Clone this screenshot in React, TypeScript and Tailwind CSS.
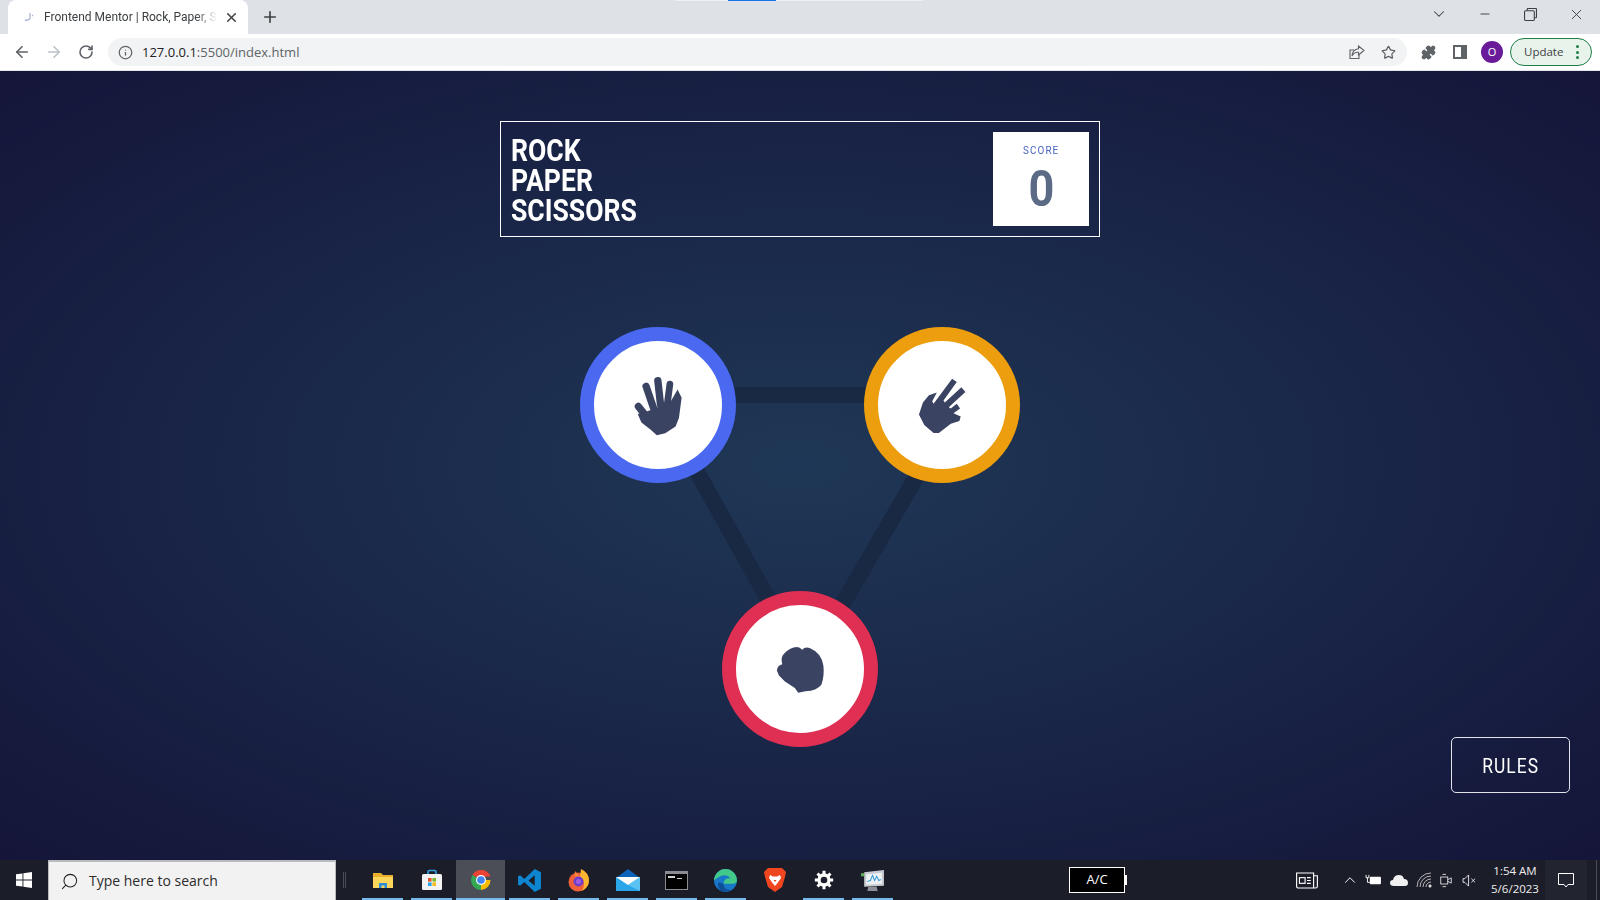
import { ArrowLeft, ArrowRight, RotateCw, Info, Star, Puzzle, X, Plus, ChevronDown, Minus, Search, ChevronUp } from 'lucide-react';

// hand drawings, coordinates taken from a 170x170 crop at 3x
const PaperIcon = () => (
  <svg viewBox="180 155 170 200" className="w-[57px] h-[67px]" fill="#3b4363">
    <g stroke="#3b4363" strokeLinecap="round" fill="none">
      <path d="M205 258 L232 292" strokeWidth="22" />
      <path d="M228 198 L250 262" strokeWidth="22" />
      <path d="M263 181 L271 252" strokeWidth="22" />
      <path d="M299 191 L291 252" strokeWidth="20" />
    </g>
    <path d="M322 207 L334 232 L326 292 L316 318 L285 338 L260 344 L240 326 L214 306 L203 280 L232 272 L300 245 Z" />
  </svg>
);

const ScissorsIcon = () => (
  <svg viewBox="160 160 170 190" className="w-[57px] h-[63px]" fill="#3b4363">
    <path d="M174 282 L186 246 L204 224 L228 216 L214 242 L218 250 L274 174 L288 184 L248 240 L252 246 L302 200 L314 214 L264 260 L270 264 L288 250 L298 264 L278 278 L300 288 L296 302 L270 310 L234 338 L218 338 L190 314 Z" />
  </svg>
);

const RockIcon = () => (
  <svg viewBox="170 170 170 160" className="w-[57px] h-[53px]" fill="#3b4363">
    <path d="M184 254 Q184 238 200 234 Q194 212 206 202 Q224 182 244 182 Q254 182 260 190 Q270 180 284 186 Q318 200 324 238 Q328 268 318 296 Q304 314 270 316 L248 320 L238 306 L208 286 L190 268 Z" />
  </svg>
);

const Token = ({ ring, children }: { ring: string; children: React.ReactNode }) => (
  <div className={`relative w-[156px] h-[156px] rounded-full border-[14px] bg-white flex items-center justify-center ${ring}`}>
    {children}
  </div>
);

const TaskSlot = ({ active, line = true, children }: { active?: boolean; line?: boolean; children: React.ReactNode }) => (
  <div className={`relative w-[49px] h-10 flex items-center justify-center ${active ? 'bg-[#4b4d57]' : ''}`}>
    {children}
    {line && <div className={`absolute bottom-0 h-[2px] bg-[#76b9ed] ${active ? 'inset-x-0' : 'inset-x-[4px]'}`} />}
  </div>
);

const App = () => {
  return (
    <div className="w-[1600px] h-[900px] overflow-hidden flex flex-col relative" style={{ fontFamily: '"Open Sans", sans-serif' }}>
      {/* Tab strip */}
      <div className="h-[34px] bg-[#dee1e6] flex items-end shrink-0 relative">
        <div className="absolute top-0 left-[675px] w-[248px] h-px bg-[#eef0f3]" />
        <div className="absolute top-0 left-[728px] w-[48px] h-px bg-[#1a73e8]" />
        <div className="ml-[8px] w-[240px] h-[34px] bg-white rounded-t-[8px] flex items-center pl-[12px] pr-[9px]">
          <svg viewBox="0 0 16 16" className="w-4 h-4 shrink-0 mr-[8px]" fill="none" stroke="#a9b4d8" strokeWidth="1.3">
            <path d="M10 4 V9 Q9 12 5 11" />
            <path d="M13 6 L12 7" />
          </svg>
          <span className="text-[12px] text-[#3c4043] whitespace-nowrap overflow-hidden flex-1 [mask-image:linear-gradient(to_right,black_88%,transparent)]" style={{ fontFamily: 'Roboto, sans-serif' }}>
            Frontend Mentor | Rock, Paper, Scissors
          </span>
          <X className="w-[15px] h-[15px] ml-[7px] text-[#3c4043] shrink-0" strokeWidth={2.4} />
        </div>
        <div className="ml-[13px] h-[34px] flex items-center">
          <Plus className="w-[18px] h-[18px] text-[#3c4043]" strokeWidth={2.2} />
        </div>
        <div className="ml-auto h-[28px] mb-[6px] flex items-center text-[#3c4043]">
          <ChevronDown className="w-[18px] h-[18px] mr-[30px]" strokeWidth={1.4} />
          <Minus className="w-[14px] h-[14px] mr-[32px]" strokeWidth={1.6} />
          <svg viewBox="0 0 12 12" className="w-[13px] h-[13px] mr-[31px]" fill="none" stroke="#3c4043" strokeWidth="1">
            <rect x="0.5" y="2.5" width="9" height="9" rx="1" />
            <path d="M3 2.5 V1 Q3 .5 3.5 .5 H11 Q11.5 .5 11.5 1 V8.5 Q11.5 9 11 9 H9.5" />
          </svg>
          <X className="w-[17px] h-[17px] mr-[15px]" strokeWidth={1.3} />
        </div>
      </div>

      {/* Toolbar */}
      <div className="h-[37px] bg-white flex items-center shrink-0 border-b border-[#e4e6e9]">
        <ArrowLeft className="w-[18px] h-[18px] ml-[13px] text-[#5f6368]" strokeWidth={2.2} />
        <ArrowRight className="w-[18px] h-[18px] ml-[14px] text-[#bdc1c6]" strokeWidth={2.2} />
        <RotateCw className="w-[16px] h-[16px] ml-[15px] text-[#5f6368]" strokeWidth={2.4} />
        <div className="ml-[14px] w-[1299px] h-[28px] bg-[#f1f3f4] rounded-full flex items-center pl-[10px] pr-[11px]">
          <Info className="w-[15px] h-[15px] text-[#5f6368]" strokeWidth={2} />
          <span className="ml-[9px] pt-px text-[13px] text-[#5f6368]">
            <span className="text-[#202124]">127.0.0.1</span>:5500/index.html
          </span>
          <div className="ml-auto flex items-center gap-[16px]">
            <svg viewBox="0 0 16 16" className="w-[16px] h-[16px]" fill="none" stroke="#5f6368" strokeWidth="1.1">
              <path d="M10 9.5 V14.5 H1 V6 H5" />
              <path d="M9.5 2 L15 6.5 L9.5 11 V8.3 Q5 8 3 12 Q3.5 5.5 9.5 4.8 Z" />
            </svg>
            <Star className="w-[15px] h-[15px] text-[#5f6368]" strokeWidth={2} />
          </div>
        </div>
        <Puzzle className="w-[15px] h-[15px] ml-[14px] text-[#5f6368] fill-[#5f6368]" />
        <svg viewBox="0 0 14 14" className="w-[14px] h-[14px] ml-[17px]">
          <path d="M0 0 H14 V14 H0 Z M2 2 V12 H8 V2 Z" fill="#5f6368" fillRule="evenodd" />
        </svg>
        <div className="ml-[14px] w-[22px] h-[22px] rounded-full bg-[#6a1b9a] text-white text-[11px] flex items-center justify-center">O</div>
        <div className="ml-[7px] w-[82px] h-[28px] rounded-full border border-[#1e7e45] bg-[#e8f3ec] flex items-center pl-[13px]">
          <span className="text-[11.5px] text-[#3c4043]">Update</span>
          <div className="ml-[13px] flex flex-col gap-[2.5px]">
            <span className="w-[3px] h-[3px] rounded-full bg-[#1e7e45]" />
            <span className="w-[3px] h-[3px] rounded-full bg-[#1e7e45]" />
            <span className="w-[3px] h-[3px] rounded-full bg-[#1e7e45]" />
          </div>
        </div>
      </div>

      {/* Page */}
      <div className="flex-1 flex flex-col items-center bg-[radial-gradient(#1f3756,#141539)] min-h-0" style={{ fontFamily: 'Roboto, sans-serif' }}>
        <div className="mt-[50px] w-[600px] h-[116px] border border-white flex items-center justify-between pl-[10px] pr-[10px]">
          <h1 className="text-white text-[32px] leading-[30px] font-bold scale-x-[.83] origin-left pt-[2px]">
            ROCK
            <br />
            PAPER
            <br />
            SCISSORS
          </h1>
          <div className="w-[96px] h-[94px] bg-white flex flex-col items-center pt-[12px]">
            <span className="text-[#4865c4] text-[11px] leading-[14px] tracking-[1.2px] scale-x-[.9]">SCORE</span>
            <span className="text-[#5c6b85] text-[50px] leading-[52px] font-bold mt-[5px] scale-x-[.9]">0</span>
          </div>
        </div>

        {/* Board */}
        <div className="relative mt-[90px] w-[440px]">
          <svg viewBox="0 0 440 420" className="absolute inset-0 w-[440px] h-[420px]" fill="none" stroke="#192843" strokeWidth="16">
            <path d="M74 68 H384 L226 340 Z" />
          </svg>
          <div className="relative flex justify-between">
            <Token ring="border-[#4a69f0]"><PaperIcon /></Token>
            <Token ring="border-[#ec9e0e]"><ScissorsIcon /></Token>
          </div>
          <div className="relative flex justify-center mt-[108px]">
            <Token ring="border-[#df2f53]"><RockIcon /></Token>
          </div>
        </div>

        <button className="-mt-[10px] self-end mr-[30px] w-[119px] h-[56px] rounded-[5px] border border-[#e2e4ea] text-white text-[20px] tracking-[1.2px] pt-px">
          <span className="inline-block scale-x-[.87]">RULES</span>
        </button>
      </div>

      {/* Taskbar */}
      <div className="h-10 bg-[#1b1d29] flex items-center shrink-0 text-white">
        <div className="w-[48px] flex justify-center">
          <svg viewBox="0 0 16 16" className="w-4 h-4" fill="#fff">
            <path d="M0 2.3 L6.5 1.4 V7.6 H0 Z M7.4 1.3 L16 0 V7.6 H7.4 Z M0 8.4 H6.5 V14.6 L0 13.7 Z M7.4 8.4 H16 V16 L7.4 14.7 Z" />
          </svg>
        </div>
        <div className="w-[288px] h-10 bg-[#f2f2f2] border-t-2 border-x border-[#b9bbbf] flex items-center pl-[11px]">
          <Search className="w-[19px] h-[19px] text-[#222] -scale-x-100" strokeWidth={1.3} />
          <span className="ml-[10px] -mt-[2px] text-[14px] text-[#2c2c2c]">Type here to search</span>
        </div>
        <div className="ml-[7px] w-[3px] h-[16px] border-x border-[#4a4c56] mr-[12px]" />

        <TaskSlot>
          <svg viewBox="0 0 24 24" className="w-[24px] h-[24px]">
            <path d="M2 5 H10 L12 7 H22 V20 H2 Z" fill="#e8b02c" />
            <path d="M2 9 H22 V20 H2 Z" fill="#fbd65a" />
            <path d="M8 20 V15 H16 V20 H13.5 V17.5 H10.5 V20 Z" fill="#2a8fd8" />
          </svg>
        </TaskSlot>
        <TaskSlot>
          <svg viewBox="0 0 24 24" className="w-[24px] h-[24px]">
            <path d="M8 7 V4 Q8 2.5 9.5 2.5 H14.5 Q16 2.5 16 4 V7" fill="none" stroke="#35a6e8" strokeWidth="1.6" />
            <rect x="2" y="6" width="20" height="16" rx="1.5" fill="#f4f4f4" />
            <rect x="8" y="10" width="3.6" height="3.6" fill="#e8532a" />
            <rect x="12.4" y="10" width="3.6" height="3.6" fill="#7dba2f" />
            <rect x="8" y="14.4" width="3.6" height="3.6" fill="#2aa3e8" />
            <rect x="12.4" y="14.4" width="3.6" height="3.6" fill="#f6b91d" />
          </svg>
        </TaskSlot>
        <TaskSlot active>
          <svg viewBox="0 0 24 24" className="w-[24px] h-[24px]">
            <path d="M12 12 L3.4 7 A10 10 0 0 1 21.5 8.5 H12 Z" fill="#ea4335" />
            <path d="M12 12 L12 22 A10 10 0 0 1 3.4 7 Z" fill="#34a853" />
            <path d="M12 12 H21.5 A10 10 0 0 1 12 22 Z" fill="#fbbc04" />
            <circle cx="12" cy="12" r="5" fill="#fff" />
            <circle cx="12" cy="12" r="3.8" fill="#4285f4" />
          </svg>
        </TaskSlot>
        <TaskSlot>
          <svg viewBox="0 0 24 24" className="w-[25px] h-[25px]">
            <path d="M17 1 L23 4 V20 L17 23 L7 13.5 L3 17 L1 16 V8 L3 7 L7 10.5 Z M17 7 L11 12 L17 17 Z" fill="#0e85d0" fillRule="evenodd" />
          </svg>
        </TaskSlot>
        <TaskSlot>
          <svg viewBox="0 0 24 24" className="w-[24px] h-[24px]">
            <circle cx="11" cy="14" r="9.5" fill="#f2603a" />
            <path d="M14 1 Q23 5 22 14 Q21 20 15 23 Q20 14 13 9 Z" fill="#fdb52f" />
            <path d="M8 3 Q7 7 9 9 L14 9 Q11 7 8 3 Z" fill="#f9843a" />
            <circle cx="11.5" cy="13.5" r="5" fill="#6e3fc9" />
            <circle cx="11.5" cy="13.5" r="2.5" fill="#a15ce0" />
          </svg>
        </TaskSlot>
        <TaskSlot>
          <svg viewBox="0 0 24 24" className="w-[24px] h-[24px]">
            <path d="M12 1 L24 10 V22 H0 V10 Z" fill="#0c64b8" />
            <path d="M0 9 H24 V23 H0 Z" fill="#2aa6e8" />
            <path d="M0 9 L12 17 L24 9 V9 H0 Z" fill="#fff" />
            <path d="M12 17 L24 9 V23 Z" fill="#6fd0f5" opacity=".7" />
          </svg>
        </TaskSlot>
        <TaskSlot>
          <div className="w-[23px] h-[19px] bg-black border border-[#8a8c92] border-t-[3px] flex items-start pl-[2px] pt-[2px]">
            <span className="w-[7px] h-[2px] bg-[#d0d0d0] mr-[2px]" />
            <span className="w-[5px] h-[1px] bg-[#d0d0d0] mt-[2px]" />
          </div>
        </TaskSlot>
        <TaskSlot>
          <svg viewBox="0 0 24 24" className="w-[25px] h-[25px]">
            <circle cx="12" cy="12" r="11" fill="#1877c9" />
            <path d="M1 12 A11 11 0 0 1 23 12 Q23 15 19 15 H10 Q11 9 17 10 Q13 5 7 8 Q3 10 1 12 Z" fill="#42c98a" />
            <path d="M10 15 Q10 21 17 21 Q13 24 8 22 Q4 19 5 14 Z" fill="#0e4f96" />
          </svg>
        </TaskSlot>
        <TaskSlot line={false}>
          <svg viewBox="0 0 24 26" className="w-[24px] h-[26px]">
            <path d="M5 1 H19 L23 5 L22 10 L19 20 L12 25 L5 20 L2 10 L1 5 Z" fill="#f0461f" />
            <path d="M7 8 L10 9.5 H14 L17 8 L18 11 L14.5 16 L12 19 L9.5 16 L6 11 Z" fill="#fff" />
            <path d="M10.5 13 H13.5 L12 15 Z" fill="#f0461f" />
          </svg>
        </TaskSlot>
        <TaskSlot>
          <svg viewBox="0 0 24 24" className="w-[20px] h-[20px]" fill="none" stroke="#fff">
            <circle cx="12" cy="12" r="6" strokeWidth="4" />
            <path d="M12 1 V5 M12 19 V23 M1 12 H5 M19 12 H23 M4.2 4.2 L7 7 M17 17 L19.8 19.8 M19.8 4.2 L17 7 M7 17 L4.2 19.8" strokeWidth="3.6" />
          </svg>
        </TaskSlot>
        <TaskSlot>
          <svg viewBox="0 0 24 24" className="w-[25px] h-[25px]">
            <path d="M4 4 L23 2 V17 L4 18 Z" fill="#c8cbd0" />
            <path d="M6 6 L21 4.5 V15 L6 16 Z" fill="#eef2f5" />
            <path d="M7 13 L10 12 L12 7 L14 12 L16 8 L18 12 L20 11" fill="none" stroke="#3b9bd9" strokeWidth="1" />
            <path d="M8 18 H16 L17 22 H7 Z" fill="#8d9096" />
            <rect x="1" y="5" width="3" height="3" fill="#5faf5a" />
          </svg>
        </TaskSlot>

        <div className="ml-[172px] w-[56px] h-[26px] bg-black border border-white flex items-center justify-center relative">
          <span className="text-[13px]">A/C</span>
          <span className="absolute -right-[3px] top-[7px] w-[2px] h-[10px] bg-white" />
        </div>

        <div className="ml-auto flex items-center h-10">
          <svg viewBox="0 0 24 18" className="w-[24px] h-[17px] mr-[22px]" fill="none" stroke="#fff" strokeWidth="1.2">
            <path d="M1 1 H19 V17 H3 Q1 17 1 15 Z M19 4 H23 V15 Q23 17 21 17 H19" />
            <rect x="4" y="6" width="6" height="6" />
            <path d="M12 6 H16 M12 9 H16 M12 12 H16" />
          </svg>
          <ChevronUp className="w-[18px] h-[18px] mr-[6px]" strokeWidth={1.3} />
          <svg viewBox="0 0 18 14" className="w-[17px] h-[13px] mr-[8px]" fill="#fff">
            <rect x="5" y="3" width="12" height="8" rx="1" />
            <path d="M1 1 V4 H4 V1 M2.5 4 V9 H5" fill="none" stroke="#fff" />
          </svg>
          <svg viewBox="0 0 18 12" className="w-[18px] h-[12px] mr-[8px]" fill="#f0f0f0">
            <path d="M4 12 Q0 12 0 9 Q0 6 3 6 Q4 1 9 1 Q13 1 14 5 Q18 5 18 9 Q18 12 15 12 Z" />
          </svg>
          <svg viewBox="0 0 16 16" className="w-[16px] h-[16px] mr-[7px]" fill="none" stroke="#c8c8c8" strokeWidth=".9">
            <path d="M1 15 A14 14 0 0 1 15 1 M4 15 A11 11 0 0 1 15 4 M7 15 A8 8 0 0 1 15 7 M10 15 A5 5 0 0 1 15 10" />
            <circle cx="14" cy="14" r="1.2" fill="#fff" />
          </svg>
          <svg viewBox="0 0 16 18" className="w-[14px] h-[17px] mr-[9px]" fill="none" stroke="#e8e8e8" strokeWidth="1">
            <rect x="2" y="5" width="8" height="8" />
            <path d="M10 8 L14 6 V12 L10 10 M4 2 H8 M4 16 H8" />
          </svg>
          <svg viewBox="0 0 16 14" className="w-[15px] h-[13px] mr-[10px]" fill="none" stroke="#e8e8e8" strokeWidth="1">
            <path d="M1 5 H3 L7 1 V13 L3 9 H1 Z M10 5 L14 9 M14 5 L10 9" />
          </svg>
          <div className="w-[56px] text-[11.5px] leading-[18px] text-center text-[#eee]">
            <div>1:54 AM</div>
            <div>5/6/2023</div>
          </div>
          <div className="ml-[2px] w-[42px] h-10 flex items-center justify-center bg-[#22242f]">
            <svg viewBox="0 0 16 16" className="w-[16px] h-[16px]" fill="none" stroke="#fff">
              <path d="M.5 1.5 H15.5 V12.5 H10 L8 15 L6 12.5 H.5 Z" />
            </svg>
          </div>
          <div className="w-[13px] h-10 pl-[9px]">
            <div className="h-10 border-l border-[#4a4c56]" />
          </div>
        </div>
      </div>
    </div>
  );
};

export default App;
